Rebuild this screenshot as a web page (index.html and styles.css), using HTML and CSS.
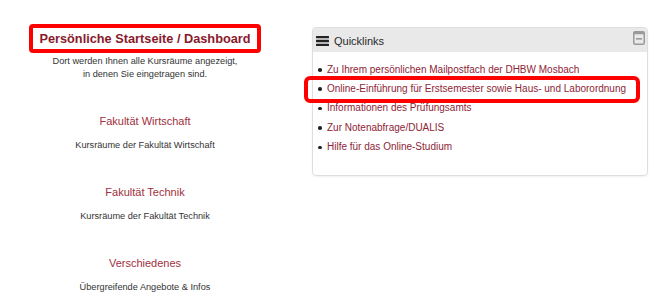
FILE: index.html
```html
<!DOCTYPE html>
<html lang="de">
<head>
    <meta charset="UTF-8">
    <meta name="viewport" content="width=device-width, initial-scale=1.0">
    <title>Dashboard</title>
    <link rel="stylesheet" href="styles.css">
</head>
<body>
    <div class="page">
        <section class="intro">
            <h1 class="page-title">Persönliche Startseite / Dashboard</h1>
            <p class="lead">Dort werden Ihnen alle Kursräume angezeigt,<br>in denen Sie eingetragen sind.</p>

            <div class="faculty">
                <h2>Fakultät Wirtschaft</h2>
                <p>Kursräume der Fakultät Wirtschaft</p>
            </div>
            <div class="faculty">
                <h2>Fakultät Technik</h2>
                <p>Kursräume der Fakultät Technik</p>
            </div>
            <div class="faculty">
                <h2>Verschiedenes</h2>
                <p>Übergreifende Angebote &amp; Infos</p>
            </div>
        </section>

        <aside class="block">
            <div class="block-header">
                <svg class="menu-icon" width="13" height="10" viewBox="0 0 13 10">
                    <rect x="0" y="0" width="13" height="2.3" rx="0.5"/>
                    <rect x="0" y="3.85" width="13" height="2.3" rx="0.5"/>
                    <rect x="0" y="7.7" width="13" height="2.3" rx="0.5"/>
                </svg>
                <span class="block-title">Quicklinks</span>
                <svg class="collapse-icon" width="12" height="14" viewBox="0 0 12 14">
                    <rect x="0.75" y="0.75" width="10.5" height="12.5" rx="1.5" fill="none" stroke="#9a9a9a" stroke-width="1.5"/>
                    <rect x="0.75" y="0.75" width="10.5" height="2.5" fill="#9a9a9a"/>
                    <rect x="3" y="7" width="6" height="1.6" fill="#9a9a9a"/>
                </svg>
            </div>
            <ul class="links">
                <li><a href="#">Zu Ihrem persönlichen Mailpostfach der DHBW Mosbach</a></li>
                <li class="marked"><a href="#">Online-Einführung für Erstsemester sowie Haus- und Laborordnung</a></li>
                <li><a href="#">Informationen des Prüfungsamts</a></li>
                <li><a href="#">Zur Notenabfrage/DUALIS</a></li>
                <li><a href="#">Hilfe für das Online-Studium</a></li>
            </ul>
        </aside>
    </div>
</body>
</html>
```

FILE: styles.css
```css
:root {
    --brand: #8a1a2b;
    --heading: #a0303e;
    --link: #8e2537;
    --text: #333333;
    --marker: #ff0000;
    --header-bg: #e9e9e9;
    --border: #dedede;
}

body {
    margin: 0;
    background: #ffffff;
    color: var(--text);
    font-family: 'Liberation Sans', Arial, sans-serif;
}

.page {
    display: flex;
    align-items: flex-start;
}

.intro {
    width: 290px;
    padding-top: 24px;
    text-align: center;
}

.page-title {
    display: inline-block;
    margin: 0;
    padding: 0 6px;
    border: 4px solid var(--marker);
    border-radius: 4px;
    font-size: 12.75px;
    line-height: 21px;
    font-weight: bold;
    color: var(--brand);
}

.lead {
    margin: 2px 0 0;
    font-size: 9.2px;
    line-height: 13px;
}

.faculty {
    margin-top: 33px;
}

.faculty + .faculty {
    margin-top: 33px;
}

.faculty h2 {
    margin: 0;
    font-size: 11px;
    line-height: 14px;
    font-weight: normal;
    color: var(--heading);
}

.faculty p {
    margin: 11px 0 0;
    font-size: 9.2px;
    line-height: 13px;
}

.block {
    width: 334px;
    margin: 27px 0 0 22px;
    border: 1px solid var(--border);
    border-radius: 4px;
    box-shadow: 0 1px 2px rgba(0, 0, 0, 0.06);
}

.block-header {
    display: flex;
    align-items: center;
    height: 24px;
    padding: 0 2px 0 3px;
    background: var(--header-bg);
    border-radius: 3px 3px 0 0;
}

.menu-icon {
    fill: #222222;
    margin-top: 2px;
}

.block-title {
    margin-left: 5px;
    font-size: 11px;
    line-height: 14px;
    color: #2a2a2a;
    padding-top: 2px;
}

.collapse-icon {
    margin-left: auto;
    align-self: flex-start;
    margin-top: 3px;
}

.links {
    list-style: none;
    margin: 0;
    padding: 7.5px 0 18px;
}

.links li {
    position: relative;
    padding-left: 14px;
    font-size: 10px;
    line-height: 19.4px;
}

.links li::before {
    content: "";
    position: absolute;
    left: 5px;
    top: 8.5px;
    width: 3.5px;
    height: 3.5px;
    border-radius: 50%;
    background: #222222;
}

.links a {
    color: var(--link);
    text-decoration: none;
}

.links .marked::after {
    content: "";
    position: absolute;
    left: -9px;
    right: 7px;
    top: -3px;
    height: 19px;
    border: 4px solid var(--marker);
    border-radius: 6px;
}
```
